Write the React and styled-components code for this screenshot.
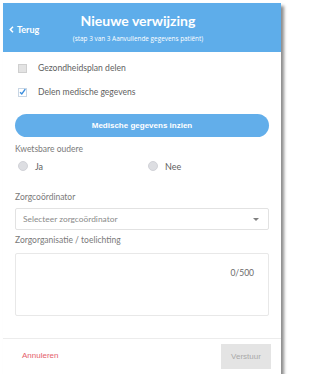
import React from 'react';
import styled, { createGlobalStyle } from 'styled-components';

const blue = '#5eadea';
const textGrey = '#5f5f5f';
const labelGrey = '#7a7a7a';
const borderGrey = '#e2e2e2';

const GlobalStyle = createGlobalStyle`
  html, body {
    margin: 0;
    padding: 0;
    background: #ffffff;
  }
  * {
    box-sizing: border-box;
  }
`;

const Page = styled.div`
  padding: 3px 0 0 3px;
  font-family: Lato, 'Open Sans', sans-serif;
`;

const Panel = styled.div`
  width: 278px;
  height: 371px;
  background: #ffffff;
  display: flex;
  flex-direction: column;
  box-shadow: 3px 3px 3px rgba(0, 0, 0, 0.45);
`;

const Header = styled.div`
  height: 49px;
  background: ${blue};
  display: grid;
  grid-template-columns: 50px 1fr 58px;
  align-items: center;
  color: #ffffff;
`;

const BackLink = styled.div`
  display: flex;
  align-items: center;
  gap: 3px;
  padding-left: 6px;
  padding-top: 3px;
  font-size: 9px;
  font-weight: 700;
`;

const TitleBlock = styled.div`
  display: flex;
  flex-direction: column;
  align-items: center;
  padding-bottom: 1px;
`;

const Title = styled.div`
  font-size: 14px;
  font-weight: 700;
  line-height: 20px;
  white-space: nowrap;
`;

const Subtitle = styled.div`
  font-family: 'Open Sans', sans-serif;
  font-size: 6.4px;
  line-height: 9px;
  margin-top: 3px;
  white-space: nowrap;
`;

const Body = styled.div`
  padding: 4px 12px 0 12px;
  flex: 1;
`;

const CheckRow = styled.label`
  height: 24px;
  display: flex;
  align-items: center;
  gap: 11px;
  padding-left: 3px;
  font-size: 8.6px;
  color: ${textGrey};
`;

const Box = styled.span`
  width: 9px;
  height: 9px;
  border: 1px solid ${(p) => (p.checked ? '#c9d6e4' : '#cfcfcf')};
  background: ${(p) => (p.checked ? '#ffffff' : '#e3e3e3')};
  display: flex;
  align-items: center;
  justify-content: center;
`;

const PillButton = styled.div`
  margin-top: 10px;
  height: 23px;
  border-radius: 12px;
  background: #62aeea;
  color: #ffffff;
  font-family: 'Liberation Sans', Arial, sans-serif;
  font-size: 8px;
  font-weight: 700;
  display: flex;
  align-items: center;
  justify-content: center;
`;

const FieldLabel = styled.div`
  height: 14px;
  line-height: 14px;
  margin-top: ${(p) => p.top}px;
  font-size: 8.5px;
  color: ${labelGrey};
`;

const RadioRow = styled.div`
  margin-top: 3px;
  height: 14px;
  display: grid;
  grid-template-columns: 130px 1fr;
  padding-left: 3px;
`;

const RadioOption = styled.div`
  display: flex;
  align-items: center;
  gap: 7px;
  font-size: 9px;
  color: ${textGrey};
`;

const RadioDot = styled.span`
  width: 10px;
  height: 10px;
  border-radius: 50%;
  background: #dddee2;
  border: 1px solid #d2d3d8;
`;

const Select = styled.div`
  margin-top: 4px;
  height: 22px;
  border: 1px solid ${borderGrey};
  border-radius: 2px;
  display: flex;
  align-items: center;
  justify-content: space-between;
  padding: 0 9px 0 7px;
  font-size: 8.4px;
  color: #8a8a8a;
`;

const Caret = styled.span`
  width: 0;
  height: 0;
  border-left: 3px solid transparent;
  border-right: 3px solid transparent;
  border-top: 3px solid #808080;
`;

const TextArea = styled.div`
  margin-top: 6px;
  height: 63px;
  border: 1px solid #e8e8e8;
  border-radius: 2px;
  display: flex;
  justify-content: flex-end;
  padding: 13px 14px 0 0;
  font-size: 8.5px;
  color: #6a6a6a;
  line-height: 12px;
`;

const Footer = styled.div`
  height: 36px;
  border-top: 1px solid #ececec;
  display: flex;
  align-items: center;
  justify-content: space-between;
  padding: 0 10px 1px 19px;
  font-family: 'Liberation Sans', Arial, sans-serif;
`;

const CancelLink = styled.div`
  font-size: 8px;
  color: #e45e6b;
  padding-bottom: 2px;
`;

const SendButton = styled.div`
  width: 50px;
  height: 25px;
  background: #e4e4e4;
  color: #a9a9a9;
  font-size: 8px;
  display: flex;
  align-items: center;
  justify-content: center;
`;

const App = () => {
  return (
    <Page>
      <GlobalStyle />
      <Panel>
        <Header>
          <BackLink>
            <svg width="5" height="7" viewBox="0 0 5 7">
              <path d="M4 0.8 L1.3 3.5 L4 6.2" fill="none" stroke="#fff" strokeWidth="1.5" />
            </svg>
            Terug
          </BackLink>
          <TitleBlock>
            <Title>Nieuwe verwijzing</Title>
            <Subtitle>(stap 3 van 3 Aanvullende gegevens patiënt)</Subtitle>
          </TitleBlock>
          <div />
        </Header>

        <Body>
          <CheckRow>
            <Box />
            Gezondheidsplan delen
          </CheckRow>
          <CheckRow>
            <Box checked>
              <svg width="8" height="8" viewBox="0 0 8 8">
                <path d="M1.2 4.2 L3.2 6.3 L7.2 0.8" fill="none" stroke="#3b8ede" strokeWidth="1.6" />
              </svg>
            </Box>
            Delen medische gegevens
          </CheckRow>

          <PillButton>Medische gegevens inzien</PillButton>

          <FieldLabel top={5}>Kwetsbare oudere</FieldLabel>
          <RadioRow>
            <RadioOption>
              <RadioDot />
              Ja
            </RadioOption>
            <RadioOption>
              <RadioDot />
              Nee
            </RadioOption>
          </RadioRow>

          <FieldLabel top={17}>Zorgcoördinator</FieldLabel>
          <Select>
            Selecteer zorgcoördinator
            <Caret />
          </Select>

          <FieldLabel top={3}>Zorgorganisatie / toelichting</FieldLabel>
          <TextArea>0/500</TextArea>
        </Body>

        <Footer>
          <CancelLink>Annuleren</CancelLink>
          <SendButton>Verstuur</SendButton>
        </Footer>
      </Panel>
    </Page>
  );
};

export default App;
